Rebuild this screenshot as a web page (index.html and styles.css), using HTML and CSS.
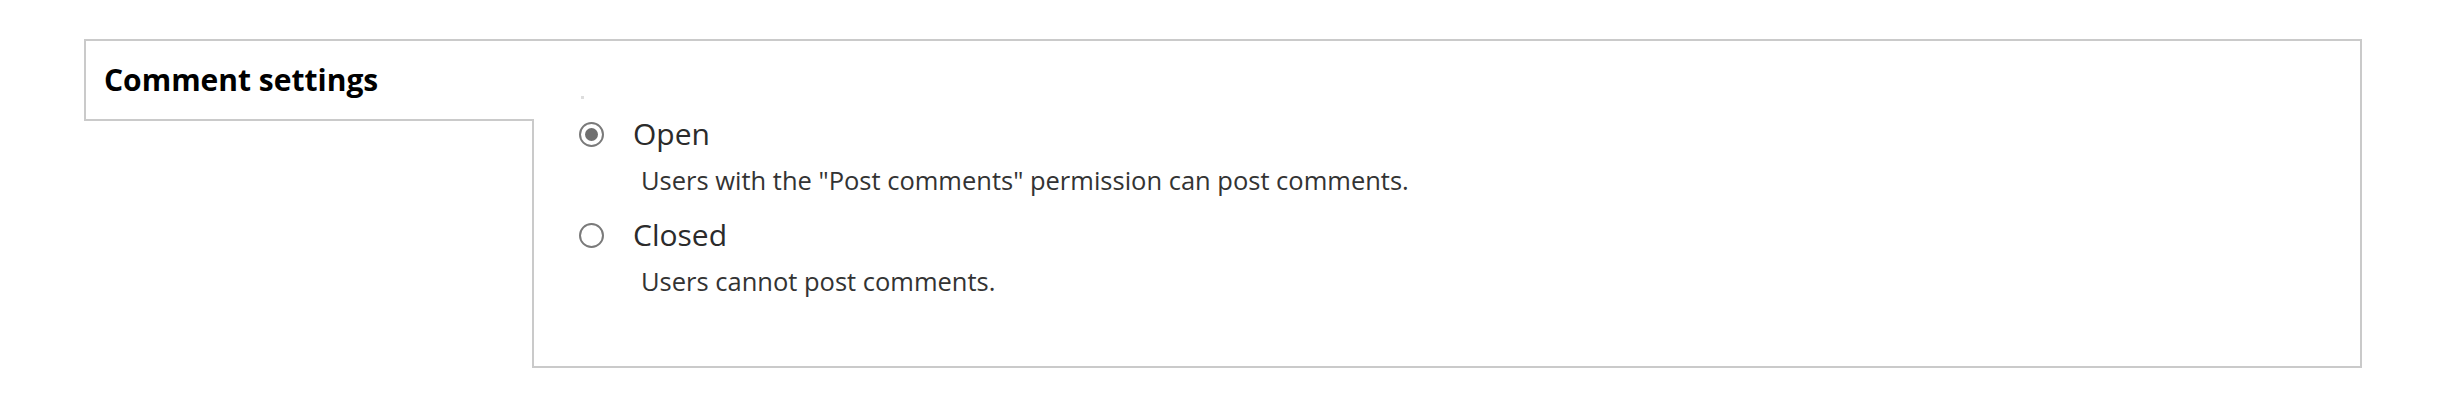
FILE: index.html
```html
<!DOCTYPE html>
<html lang="en">
<head>
<meta charset="utf-8">
<title>Comment settings</title>
<link rel="stylesheet" href="styles.css">
</head>
<body>
<div class="vtabs">
  <div class="vtabs-menu">
    <div class="vtab">
      <strong class="vtab-title">Comment settings</strong>
    </div>
  </div>
  <div class="vtabs-pane">
    <span class="marker"></span>
    <div class="options">
      <label class="option">
        <input class="radio" type="radio" name="comment" checked>
        <span class="option-label">Open</span>
        <span class="option-desc">Users with the "Post comments" permission can post comments.</span>
      </label>
      <label class="option">
        <input class="radio" type="radio" name="comment">
        <span class="option-label">Closed</span>
        <span class="option-desc">Users cannot post comments.</span>
      </label>
    </div>
  </div>
</div>
</body>
</html>
```

FILE: styles.css
```css
html, body {
  margin: 0;
  padding: 0;
  background: #ffffff;
}

body {
  font-family: "Open Sans", "Noto Sans", sans-serif;
  color: #333333;
}

.vtabs {
  display: flex;
  align-items: flex-start;
  margin: 39px 0 0 84px;
  width: 2278px;
}

.vtabs-menu {
  width: 450px;
  flex: none;
  position: relative;
  z-index: 1;
}

.vtab {
  box-sizing: border-box;
  height: 82px;
  border: 2px solid #cacaca;
  border-right: none;
  background: #ffffff;
  display: flex;
  align-items: center;
  padding-left: 18px;
}

.vtab-title {
  font-size: 30px;
  font-weight: 700;
  color: #000000;
  line-height: 40px;
}

.vtabs-pane {
  box-sizing: border-box;
  flex: 1;
  margin-left: -2px;
  height: 329px;
  border: 2px solid #cacaca;
  padding: 55px 0 0 45px;
  display: flex;
  flex-direction: column;
}

.marker {
  display: block;
  width: 3px;
  height: 3px;
  background: #dddddd;
  margin-left: 2px;
}

.options {
  display: flex;
  flex-direction: column;
  gap: 18px;
  margin-top: 16px;
}

.option {
  display: grid;
  grid-template-columns: 54px auto;
  grid-template-rows: 38px 36px;
  row-gap: 9px;
  align-items: center;
}

.radio {
  appearance: none;
  -webkit-appearance: none;
  box-sizing: border-box;
  margin: 0;
  width: 25px;
  height: 25px;
  border: 2px solid #7a7a7a;
  border-radius: 50%;
  background: #ffffff;
  display: grid;
  place-items: center;
}

.radio:checked::after {
  content: "";
  width: 13px;
  height: 13px;
  border-radius: 50%;
  background: #6f6f6f;
}

.option-label {
  font-size: 30px;
  line-height: 38px;
  color: #2b2b2b;
}

.option-desc {
  grid-column: 2;
  font-size: 25.5px;
  line-height: 36px;
  color: #333333;
  padding-left: 8px;
}
```
